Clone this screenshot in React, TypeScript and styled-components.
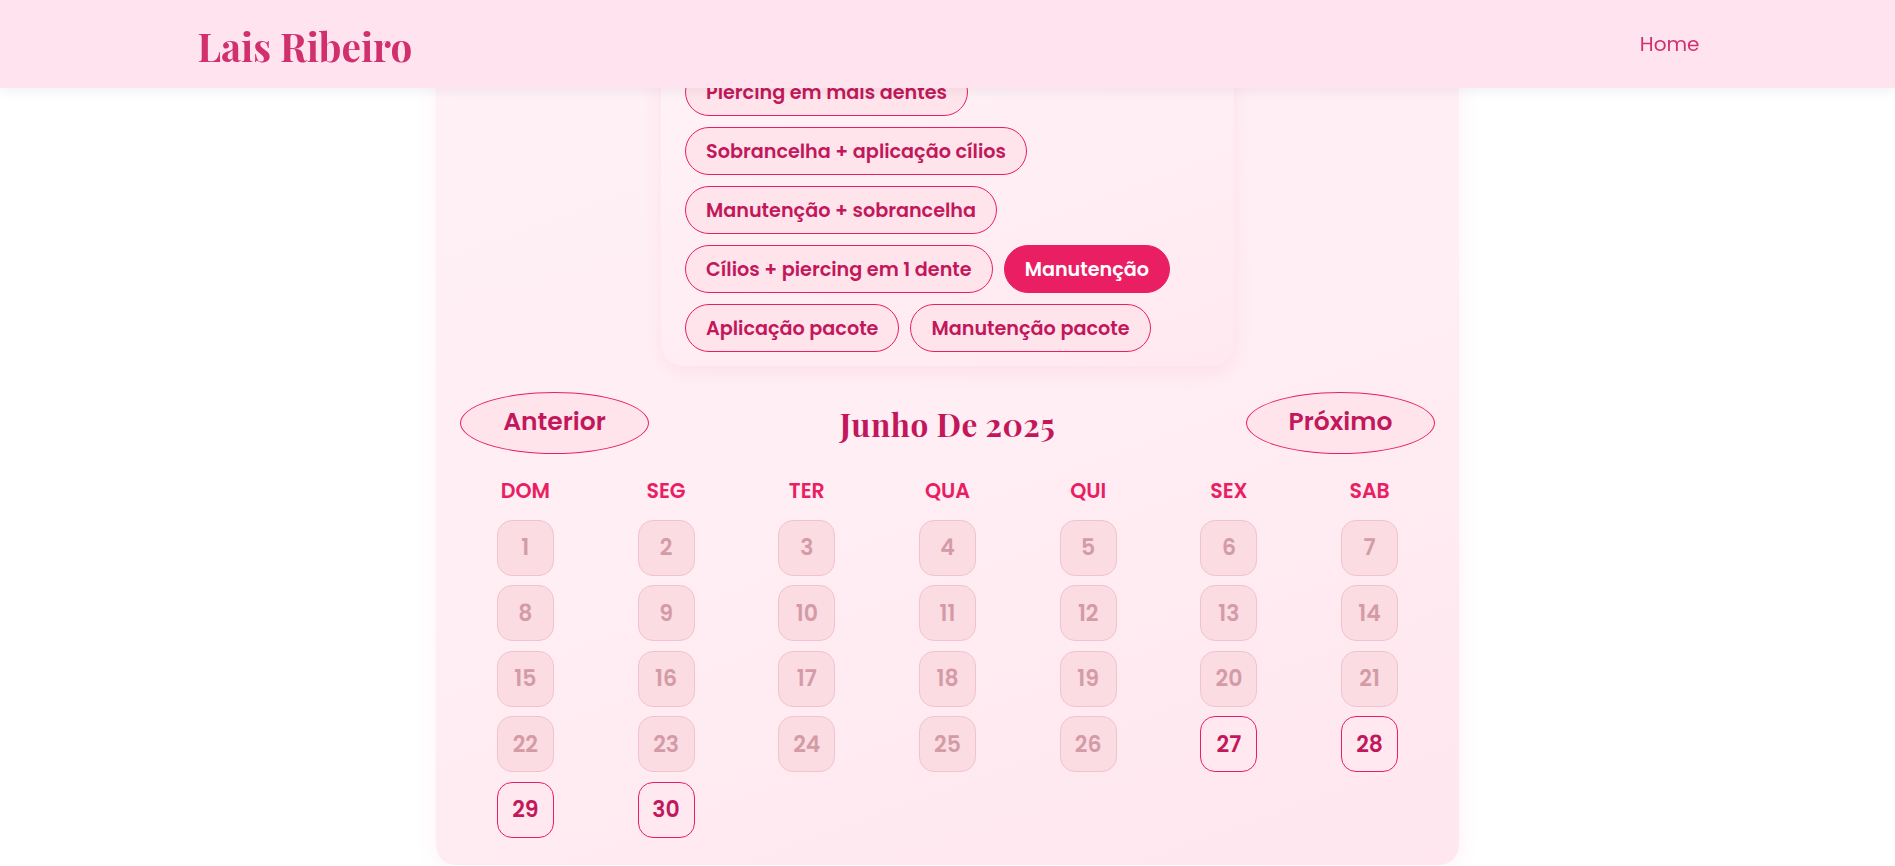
import React from "react";
import styled, { createGlobalStyle } from "styled-components";

const GlobalStyle = createGlobalStyle`
  html, body { margin: 0; padding: 0; background: #ffffff; }
  body { font-family: "Poppins", "Inter", "Noto Sans", sans-serif; }
  * { box-sizing: border-box; }
`;

const Header = styled.header`
  position: fixed;
  top: 0;
  left: 0;
  right: 0;
  height: 88px;
  background: #ffe4ef;
  box-shadow: 0 3px 12px rgba(0, 0, 0, 0.06);
  z-index: 10;
`;

const HeaderInner = styled.div`
  max-width: 1500px;
  height: 100%;
  margin: 0 auto;
  display: flex;
  align-items: center;
  justify-content: space-between;
`;

const Logo = styled.div`
  font-family: "Playfair Display", "Liberation Serif", serif;
  font-weight: 700;
  font-size: 38.6px;
  color: #d1306f;
  padding-top: 4px;
`;

const NavLink = styled.a`
  font-size: 20px;
  color: #d1306f;
  text-decoration: none;
  margin-right: -2px;
  margin-top: 0;
`;

const Main = styled.main`
  padding-top: 20px;
`;

const Card = styled.section`
  width: 1023px;
  margin: 0 auto;
  padding: 24px 24px 27px;
  border-radius: 20px;
  background: linear-gradient(160deg, #fff1f6 0%, #ffeef4 50%, #ffe6ef 100%);
  box-shadow: 0 6px 24px rgba(233, 30, 99, 0.06);
  display: flex;
  flex-direction: column;
  align-items: center;
`;

const ServicesBox = styled.div`
  width: 573px;
  padding: 24px 24px 14px;
  border-radius: 24px;
  background: linear-gradient(160deg, #fff3f7, #ffe9f0);
  box-shadow: 0 6px 20px rgba(233, 30, 99, 0.07);
  display: flex;
  flex-wrap: wrap;
  gap: 11px;
`;

const Pill = styled.button<{ $active?: boolean }>`
  height: 48px;
  padding: 0 20px;
  border-radius: 24px;
  border: 1px solid #e91e63;
  background: ${(p) => (p.$active ? "#e91e63" : "#ffe4ec")};
  color: ${(p) => (p.$active ? "#ffffff" : "#c2185b")};
  font-family: "Poppins", "Inter", sans-serif;
  font-weight: 600;
  font-size: 19.2px;
  cursor: pointer;
  white-space: nowrap;
`;

const NavRow = styled.div`
  width: 100%;
  margin-top: 26px;
  display: flex;
  align-items: center;
  justify-content: space-between;
`;

const NavButton = styled.button`
  width: 189px;
  height: 62px;
  border-radius: 50%;
  border: 1px solid #e91e63;
  background: #ffe4ec;
  color: #c2185b;
  font-family: "Poppins", "Inter", sans-serif;
  font-weight: 600;
  font-size: 25px;
  cursor: pointer;
  padding: 0 0 2px;
`;

const MonthTitle = styled.h2`
  margin: 0;
  font-family: "Playfair Display", "Liberation Serif", serif;
  font-weight: 700;
  font-size: 31.5px;
  letter-spacing: 0.5px;
  color: #c2185b;
  padding-top: 2px;
`;

const Grid = styled.div`
  width: 100%;
  margin-top: 24px;
  display: grid;
  grid-template-columns: repeat(7, 1fr);
  column-gap: 10px;
  row-gap: 9.6px;
  justify-items: center;
`;

const WeekDay = styled.div`
  font-weight: 600;
  font-size: 20.5px;
  color: #e91e63;
  height: 26px;
  line-height: 26px;
  margin-bottom: 6px;
`;

const Day = styled.button<{ $available?: boolean }>`
  width: 57px;
  height: 56px;
  border-radius: 15px;
  border: 1px solid ${(p) => (p.$available ? "#e91e63" : "#f0c4cc")};
  background: ${(p) => (p.$available ? "#ffe8ef" : "#fadce2")};
  color: ${(p) => (p.$available ? "#c2185b" : "#d49ba7")};
  font-family: "Poppins", "Inter", sans-serif;
  font-weight: 600;
  font-size: 22px;
  cursor: ${(p) => (p.$available ? "pointer" : "default")};
  padding: 0;
`;

const services: { label: string; active?: boolean }[] = [
  { label: "Piercing em mais dentes" },
  { label: "Sobrancelha + aplicação cílios" },
  { label: "Manutenção + sobrancelha" },
  { label: "Cílios + piercing em 1 dente" },
  { label: "Manutenção", active: true },
  { label: "Aplicação pacote" },
  { label: "Manutenção pacote" },
];

const weekDays = ["DOM", "SEG", "TER", "QUA", "QUI", "SEX", "SAB"];
const available = new Set([27, 28, 29, 30]);
const days = Array.from({ length: 30 }, (_, i) => i + 1);

export default function App() {
  return (
    <>
      <GlobalStyle />
      <Header>
        <HeaderInner>
          <Logo>Lais Ribeiro</Logo>
          <NavLink href="#">Home</NavLink>
        </HeaderInner>
      </Header>
      <Main>
        <Card>
          <ServicesBox>
            {services.map((s) => (
              <Pill key={s.label} $active={s.active}>
                {s.label}
              </Pill>
            ))}
          </ServicesBox>
          <NavRow>
            <NavButton>Anterior</NavButton>
            <MonthTitle>Junho De 2025</MonthTitle>
            <NavButton>Próximo</NavButton>
          </NavRow>
          <Grid>
            {weekDays.map((d) => (
              <WeekDay key={d}>{d}</WeekDay>
            ))}
            {days.map((d) => (
              <Day key={d} $available={available.has(d)}>
                {d}
              </Day>
            ))}
          </Grid>
        </Card>
      </Main>
    </>
  );
}
